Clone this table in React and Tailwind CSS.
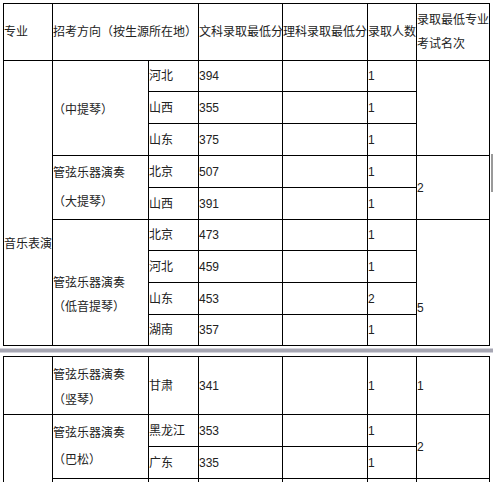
import React from "react";

const base =
  "border-r border-b border-black flex items-center whitespace-nowrap text-[12px] leading-[16px] text-[#222]";

function C({ cls = "", children }) {
  return <div className={`${base} ${cls}`}>{children}</div>;
}

function Two({ a, b, lh }) {
  return (
    <div className={`flex flex-col ${lh}`}>
      <span>{a}</span>
      <span>{b}</span>
    </div>
  );
}

const t1 = [
  ["河北", "394", "1"],
  ["山西", "355", "1"],
  ["山东", "375", "1"],
  ["北京", "507", "1"],
  ["山西", "391", "1"],
  ["北京", "473", "1"],
  ["河北", "459", "1"],
  ["山东", "453", "2"],
  ["湖南", "357", "1"],
];

const rowStart = [
  "row-start-2",
  "row-start-3",
  "row-start-4",
  "row-start-5",
  "row-start-6",
  "row-start-7",
  "row-start-8",
  "row-start-9",
  "row-start-10",
];

export default function App() {
  return (
    <div className="relative w-[493px] h-[482px] overflow-hidden bg-white [font-family:'Liberation_Sans','Noto_Sans_CJK_SC',sans-serif]">
      <div className="pt-[3px] pl-[3px]">
        <div className="grid w-fit border-l border-t border-black grid-cols-[49px_96px_50px_84px_85px_49px_73px] grid-rows-[57px_31px_32px_32px_32px_32px_31px_32px_32px_31px]">
          <C cls="col-start-1 row-start-1">专业</C>
          <C cls="col-start-2 col-span-2 row-start-1">招考方向（按生源所在地）</C>
          <C cls="col-start-4 row-start-1">文科录取最低分</C>
          <C cls="col-start-5 row-start-1">理科录取最低分</C>
          <C cls="col-start-6 row-start-1">录取人数</C>
          <C cls="col-start-7 row-start-1">
            <Two a="录取最低专业" b="考试名次" lh="leading-[24px]" />
          </C>

          <C cls="col-start-1 row-start-2 row-span-9 pt-[81px]">音乐表演</C>

          <C cls="col-start-2 row-start-2 row-span-3 pt-[4px]">（中提琴）</C>
          <C cls="col-start-2 row-start-5 row-span-2">
            <Two a="管弦乐器演奏" b="（大提琴）" lh="leading-[29px]" />
          </C>
          <C cls="col-start-2 row-start-7 row-span-4 pt-[25px]">
            <Two a="管弦乐器演奏" b="（低音提琴）" lh="leading-[24px]" />
          </C>

          {t1.map((r, i) => (
            <React.Fragment key={i}>
              <C cls={`col-start-3 ${rowStart[i]}`}>{r[0]}</C>
              <C cls={`col-start-4 ${rowStart[i]}`}>{r[1]}</C>
              <C cls={`col-start-5 ${rowStart[i]}`}></C>
              <C cls={`col-start-6 ${rowStart[i]}`}>{r[2]}</C>
            </React.Fragment>
          ))}

          <C cls="col-start-7 row-start-2 row-span-3"></C>
          <C cls="col-start-7 row-start-5 row-span-2">2</C>
          <C cls="col-start-7 row-start-7 row-span-4 pt-[51px]">5</C>
        </div>
      </div>

      <div className="mt-[2px] flex flex-col">
        <div className="h-[1px] bg-[#d2d2da]"></div>
        <div className="h-[3px] bg-[#a6a6b2]"></div>
        <div className="h-[1px] bg-[#d2d2da]"></div>
      </div>

      <div className="pt-[3px] pl-[3px]">
        <div className="grid w-fit border-l border-t border-black grid-cols-[49px_96px_50px_84px_85px_49px_73px] grid-rows-[58px_32px_32px_32px]">
          <C cls="col-start-1 row-start-1"></C>
          <C cls="col-start-1 row-start-2 row-span-3"></C>

          <C cls="col-start-2 row-start-1 pt-[4px]">
            <Two a="管弦乐器演奏" b="（竖琴）" lh="leading-[25px]" />
          </C>
          <C cls="col-start-2 row-start-2 row-span-2">
            <Two a="管弦乐器演奏" b="（巴松）" lh="leading-[27px]" />
          </C>
          <C cls="col-start-2 row-start-4"></C>

          <C cls="col-start-3 row-start-1">甘肃</C>
          <C cls="col-start-4 row-start-1">341</C>
          <C cls="col-start-5 row-start-1"></C>
          <C cls="col-start-6 row-start-1">1</C>
          <C cls="col-start-7 row-start-1">1</C>

          <C cls="col-start-3 row-start-2">黑龙江</C>
          <C cls="col-start-4 row-start-2">353</C>
          <C cls="col-start-5 row-start-2"></C>
          <C cls="col-start-6 row-start-2">1</C>

          <C cls="col-start-3 row-start-3">广东</C>
          <C cls="col-start-4 row-start-3">335</C>
          <C cls="col-start-5 row-start-3"></C>
          <C cls="col-start-6 row-start-3">1</C>

          <C cls="col-start-7 row-start-2 row-span-2">2</C>

          <C cls="col-start-3 row-start-4"></C>
          <C cls="col-start-4 row-start-4"></C>
          <C cls="col-start-5 row-start-4"></C>
          <C cls="col-start-6 row-start-4"></C>
          <C cls="col-start-7 row-start-4"></C>
        </div>
      </div>

      <div className="absolute left-[491px] top-[154px] w-[2px] h-[38px] bg-[#9a9a9a]"></div>
    </div>
  );
}
